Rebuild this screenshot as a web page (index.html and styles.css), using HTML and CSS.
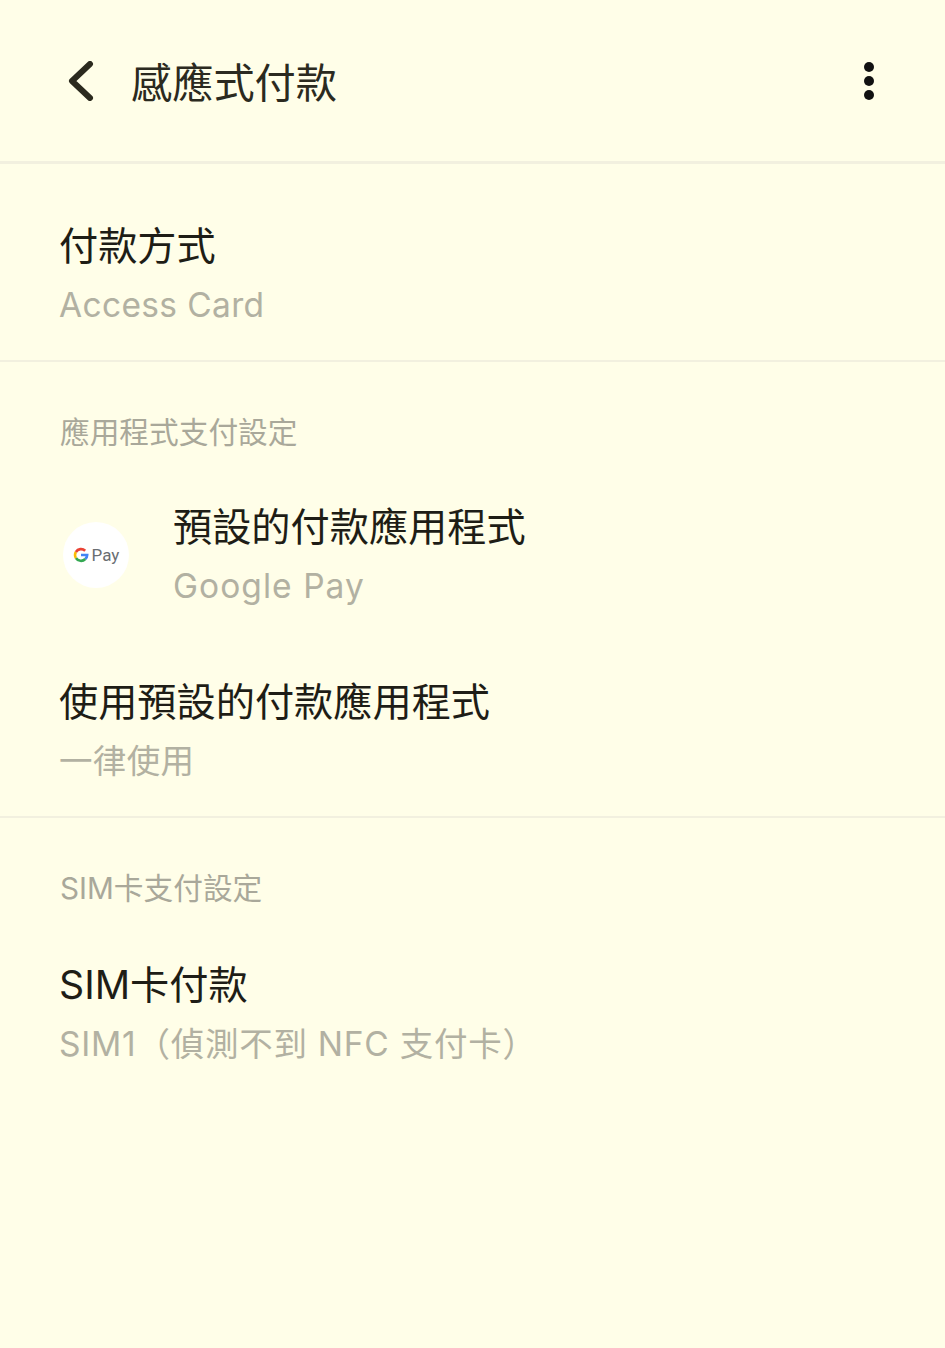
FILE: index.html
```html
<!DOCTYPE html>
<html lang="zh-Hant">
<head>
<meta charset="utf-8">
<title>感應式付款</title>
<link rel="stylesheet" href="styles.css">
</head>
<body>
<div class="page">
  <header class="topbar">
    <svg class="back" viewBox="0 0 28 40" width="28" height="40"><path d="M24 3 L6 20 L24 37" fill="none" stroke="#2b2a1e" stroke-width="6" stroke-linecap="round" stroke-linejoin="round"/></svg>
    <h1 class="title">感應式付款</h1>
    <div class="more"><i></i><i></i><i></i></div>
  </header>
  <section class="group first">
    <div class="row">
      <div class="label">付款方式</div>
      <div class="sub">Access Card</div>
    </div>
  </section>
  <section class="group second">
    <div class="head">應用程式支付設定</div>
    <div class="row app">
      <div class="badge">
        <svg class="g" viewBox="0 0 16 16" width="16" height="16">
          <path d="M8 8H14.2C14.2 9.8 13.4 11 12.3 12" fill="none" stroke="#4285f4" stroke-width="2.6"/>
          <path d="M12.3 12A6 6 0 0 1 2.9 11" fill="none" stroke="#34a853" stroke-width="2.6"/>
          <path d="M2.9 11A6 6 0 0 1 2.9 5" fill="none" stroke="#fbbc05" stroke-width="2.6"/>
          <path d="M2.9 5A6 6 0 0 1 12.2 3.8" fill="none" stroke="#ea4335" stroke-width="2.6"/>
        </svg>
        <span class="pay">Pay</span>
      </div>
      <div>
        <div class="label">預設的付款應用程式</div>
        <div class="sub gpay">Google Pay</div>
      </div>
    </div>
    <div class="row r3">
      <div class="label">使用預設的付款應用程式</div>
      <div class="sub">一律使用</div>
    </div>
  </section>
  <section class="group third">
    <div class="head">SIM卡支付設定</div>
    <div class="row r4">
      <div class="label">SIM卡付款</div>
      <div class="sub simcard">SIM1（偵測不到 NFC 支付卡）</div>
    </div>
  </section>
</div>
</body>
</html>
```

FILE: styles.css
```css
* { box-sizing: border-box; }
html, body { margin: 0; padding: 0; }
body {
  background: #fffee8;
  font-family: "Inter", "Noto Sans CJK TC", sans-serif;
  color: #1e1d16;
}
.page { width: 945px; height: 1348px; overflow: hidden; }
.topbar {
  height: 164px;
  padding: 1px 71px 0 66px;
  display: flex;
  align-items: center;
  border-bottom: 3px solid #f2f0df;
}
.back { flex: none; margin-right: 37px; }
.title { flex: 1; margin: 0; padding-top: 4px; font-size: 41.2px; font-weight: 400; line-height: 60px; color: #2b2a20; }
.more { display: flex; flex-direction: column; gap: 4px; }
.more i { display: block; width: 10px; height: 10px; border-radius: 50%; background: #111; }
.group { padding: 0 60px; border-bottom: 2px solid #f2f0df; }
.group.third { border-bottom: 0; }
.first { height: 198px; padding-top: 55px; }
.second { height: 456px; padding-top: 50px; }
.third { padding-top: 50px; }
.row { margin-left: -1px; }
.label { font-size: 39.2px; line-height: 54px; }
.sub { font-size: 33.5px; line-height: 46px; letter-spacing: 0.35px; color: #b2b1a2; margin-top: 9px; }
.gpay { letter-spacing: 1.05px; }
.simcard { letter-spacing: 0.75px; }
.head { font-size: 29.7px; line-height: 40px; color: #a9a89a; }
.app { display: flex; align-items: center; gap: 44px; margin-top: 48px; }
.badge {
  width: 66px; height: 66px; flex: none;
  margin-left: 4px;
  border-radius: 50%;
  background: #fff;
  display: flex; align-items: center; justify-content: center; gap: 3px;
}
.g { flex: none; }
.pay { font-family: "Roboto", sans-serif; font-size: 17px; font-weight: 400; color: #6a6e72; }
.r3 { margin-top: 66px; }
.r4 { margin-top: 50px; }
```
